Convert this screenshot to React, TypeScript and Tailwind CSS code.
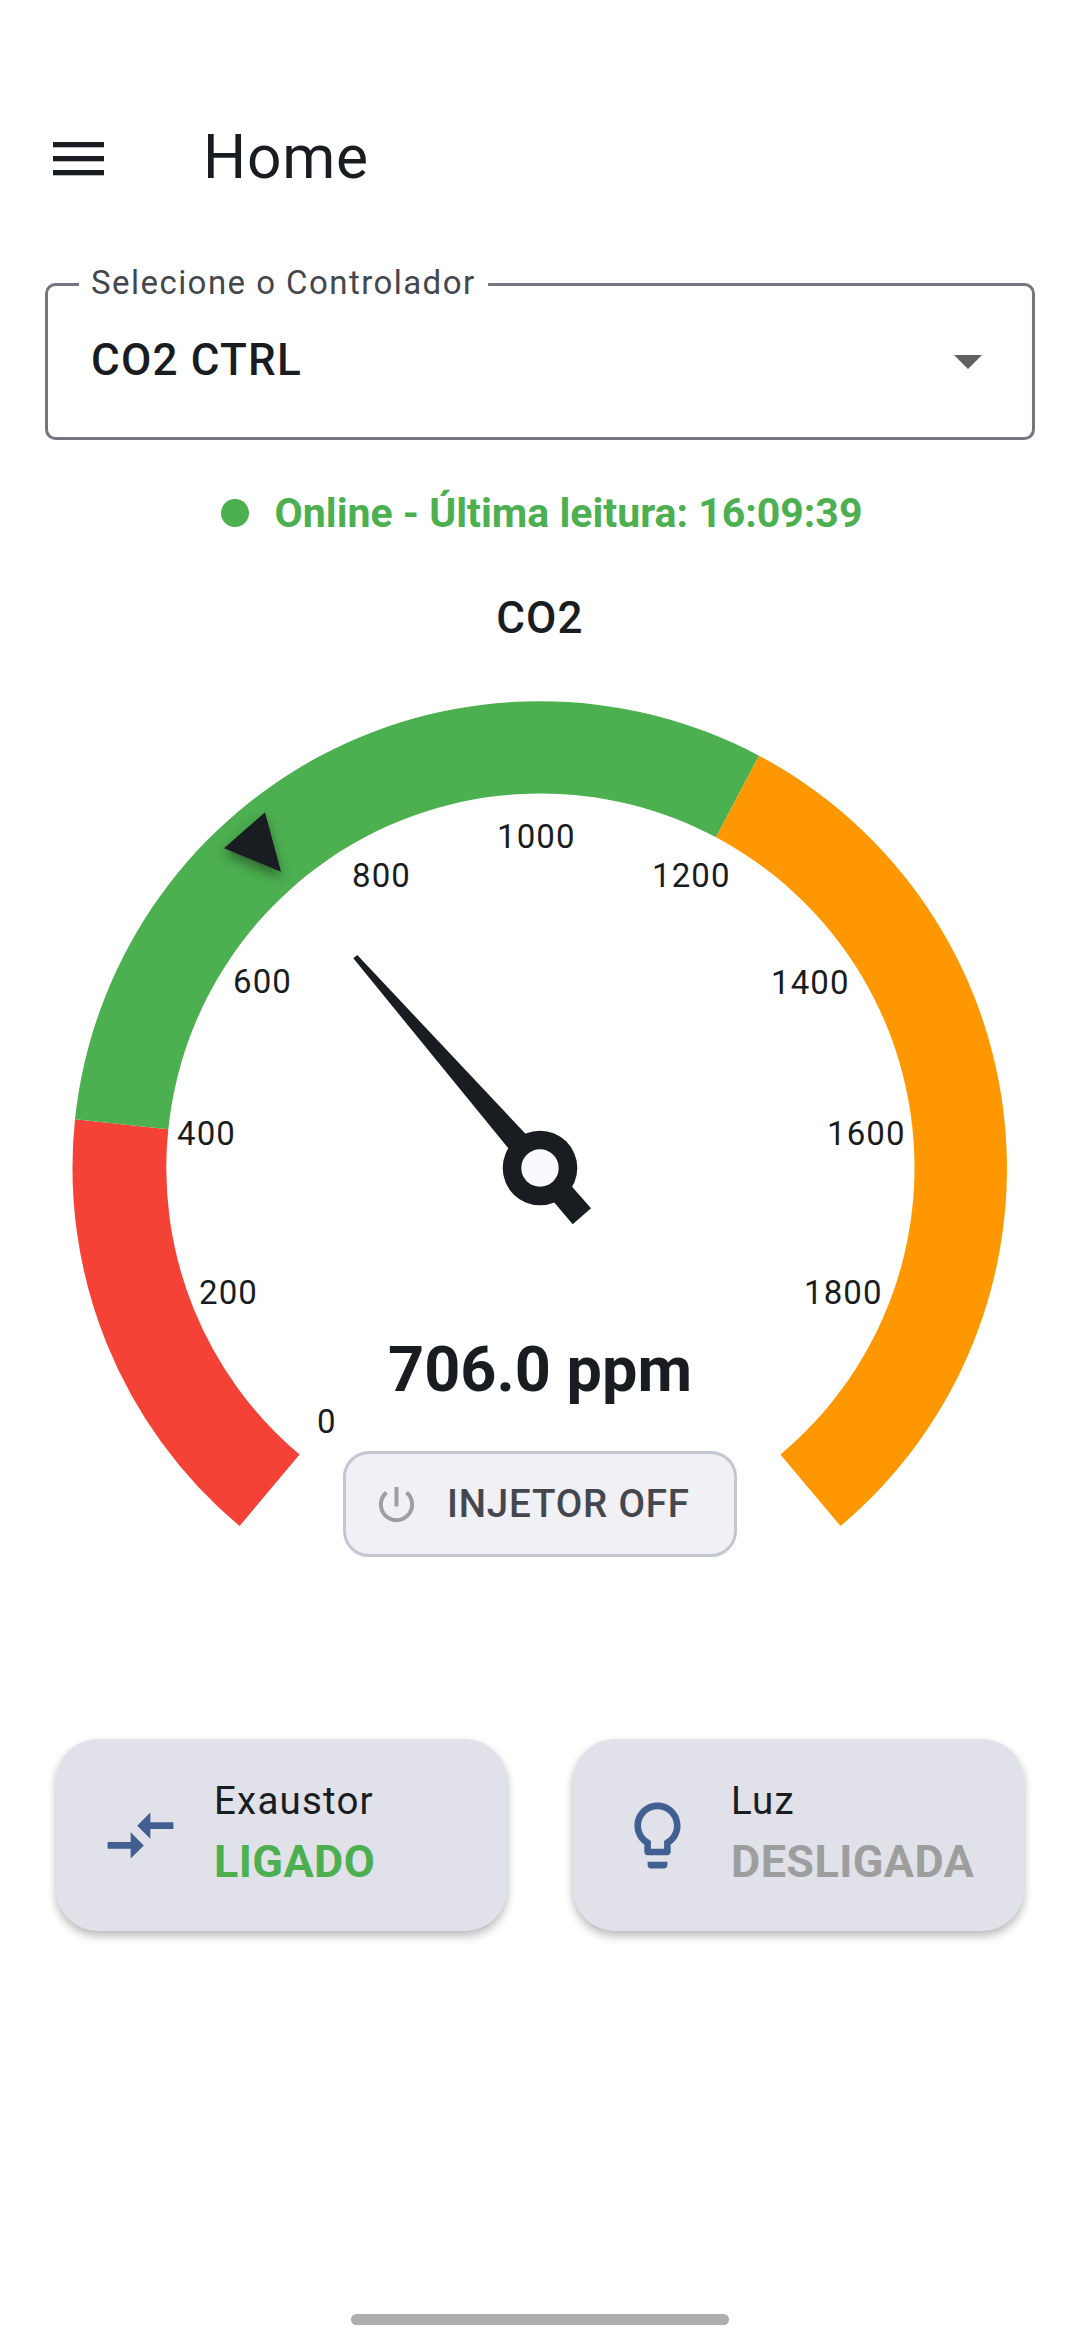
const scaleLabels = [
  { text: "0", x: 317, y: 1433 },
  { text: "200", x: 199, y: 1304 },
  { text: "400", x: 177, y: 1145 },
  { text: "600", x: 233, y: 993 },
  { text: "800", x: 352, y: 887 },
  { text: "1000", x: 497, y: 848 },
  { text: "1200", x: 652, y: 887 },
  { text: "1400", x: 771, y: 994 },
  { text: "1600", x: 827, y: 1145 },
  { text: "1800", x: 804, y: 1304 },
];

function Gauge() {
  return (
    <div className="relative mt-[37px] h-[900px] w-full">
      <svg width="1080" height="900" viewBox="0 680 1080 900" className="block">
        <path d="M239.5 1526.1 A467.5 467.5 0 0 1 75 1119.3 L168.3 1129.3 A374 374 0 0 0 299.6 1454.5 Z" fill="#f44336" />
        <path d="M75 1119.3 A467.5 467.5 0 0 1 759 755.7 L716 837.3 A374 374 0 0 0 168.3 1129.3 Z" fill="#4caf50" />
        <path d="M759 755.7 A467.5 467.5 0 0 1 840.5 1526.1 L780.4 1454.5 A374 374 0 0 0 716 837.3 Z" fill="#ff9800" />

        <polygon
          points="265,812.3 224,848.3 281,871.7"
          fill="#191c20"
          className="drop-shadow-[0_6px_6px_rgba(0,0,0,0.4)]"
        />

        {scaleLabels.map((l) => (
          <text key={l.text} x={l.x} y={l.y} fill="#191c20" fontSize="33" letterSpacing="1.1">
            {l.text}
          </text>
        ))}

        <polygon points="353.3,958.3 357.3,955 525,1133.3 591,1208.3 572.7,1224.3 508.3,1148.3" fill="#191c20" />
        <circle cx="540" cy="1168" r="37.3" fill="#191c20" />
        <circle cx="540" cy="1168" r="18.7" fill="#f9f9ff" />

        <text x="540" y="1391" textAnchor="middle" fill="#191c20" fontSize="63" fontWeight="700">
          706.0 ppm
        </text>
      </svg>

      <div className="absolute left-[343px] top-[771px] flex h-[106px] w-[394px] items-center rounded-[26px] border-[3px] border-[#c4c6d0] bg-[#f0f0f5] pl-[27px]">
        <svg width="47" height="47" viewBox="0 0 24 24" fill="#9e9e9e">
          <path d="M13 3h-2v10h2V3zm4.83 2.17l-1.42 1.42C17.99 7.86 19 9.81 19 12c0 3.87-3.13 7-7 7s-7-3.13-7-7c0-2.19 1.01-4.14 2.58-5.42L6.17 5.17C4.23 6.82 3 9.26 3 12c0 4.97 4.03 9 9 9s9-4.03 9-9c0-2.74-1.23-5.18-3.17-6.83z" />
        </svg>
        <span className="ml-[27px] text-[38.5px] leading-none font-medium tracking-[0.8px] text-[#44474e]">INJETOR OFF</span>
      </div>
    </div>
  );
}

function StatusCard({ title, value, valueColor, iconPath }: { title: string; value: string; valueColor: string; iconPath: string }) {
  return (
    <div className="flex h-[192px] w-[451px] items-center rounded-[42px] bg-[#e0e1e9] pl-[45px] shadow-[0_5px_10px_rgba(0,0,0,0.28)]">
      <svg width="79" height="79" viewBox="0 0 24 24" fill="#415f91" className="shrink-0">
        <path d={iconPath} />
      </svg>
      <div className="ml-[34px] flex flex-col">
        <span className="text-[38.5px] leading-[53px] tracking-[1.2px] text-[#191c20]">{title}</span>
        <span className={`text-[45px] leading-[69px] font-bold tracking-[0.4px] ${valueColor}`}>{value}</span>
      </div>
    </div>
  );
}

export default function App() {
  return (
    <main className="flex h-[2340px] w-[1080px] flex-col overflow-hidden bg-white font-[Roboto,sans-serif] text-[#191c20]">
      <header className="mt-[95px] flex h-[126px] items-center">
        <svg width="51" height="34" viewBox="0 0 51 34" fill="#191c20" className="ml-[53px] mt-[2px]">
          <rect x="0" y="0" width="51" height="5.3" />
          <rect x="0" y="14" width="51" height="5.3" />
          <rect x="0" y="28" width="51" height="5.3" />
        </svg>
        <h1 className="ml-[99px] text-[60.5px] leading-none tracking-[0.8px]">Home</h1>
      </header>

      <div className="relative mx-[45px] mt-[62px] flex h-[157px] items-center justify-between rounded-[10.5px] border-[3px] border-[#74777f] pr-[50px] pl-[43px]">
        <span className="absolute -top-[21px] left-[31px] bg-white px-[12px] text-[33px] leading-[36px] tracking-[1.45px] text-[#44474e]">
          Selecione o Controlador
        </span>
        <span className="mb-[3px] text-[44px] leading-none font-medium tracking-[1.2px]">CO2 CTRL</span>
        <svg width="28" height="14" viewBox="0 0 28 14" fill="#616161">
          <polygon points="0,0 28,0 14,14" />
        </svg>
      </div>

      <div className="mt-[49px] flex items-center justify-center pl-[3px] text-[#4caf50]">
        <span className="h-[28px] w-[28px] rounded-full bg-[#4caf50]" />
        <span className="ml-[26px] text-[41px] leading-[48px] font-bold">Online - Última leitura: 16:09:39</span>
      </div>

      <p className="mt-[56px] text-center text-[44px] leading-[50px] font-medium tracking-[1.2px]">CO2</p>

      <Gauge />

      <div className="mx-[56px] mt-[159px] flex justify-between">
        <StatusCard
          title="Exaustor"
          value="LIGADO"
          valueColor="text-[#4caf50]"
          iconPath="M9.01 14H2v2h7.01v3L13 15l-3.99-4v3zm5.98-1v-3H22V8h-7.01V5L11 9l3.99 4z"
        />
        <StatusCard
          title="Luz"
          value="DESLIGADA"
          valueColor="text-[#9e9e9e]"
          iconPath="M9 21c0 .55.45 1 1 1h4c.55 0 1-.45 1-1v-1H9v1zm3-19C8.14 2 5 5.14 5 9c0 2.38 1.19 4.47 3 5.74V17c0 .55.45 1 1 1h6c.55 0 1-.45 1-1v-2.26c1.81-1.27 3-3.36 3-5.74 0-3.86-3.14-7-7-7zm2.85 11.1l-.85.6V16h-4v-2.3l-.85-.6C7.8 12.16 7 10.63 7 9c0-2.76 2.24-5 5-5s5 2.24 5 5c0 1.63-.8 3.16-2.15 4.1z"
        />
      </div>

      <div className="mx-auto mt-auto mb-[15px] h-[11px] w-[378px] rounded-full bg-[#aeaeae]" />
    </main>
  );
}
